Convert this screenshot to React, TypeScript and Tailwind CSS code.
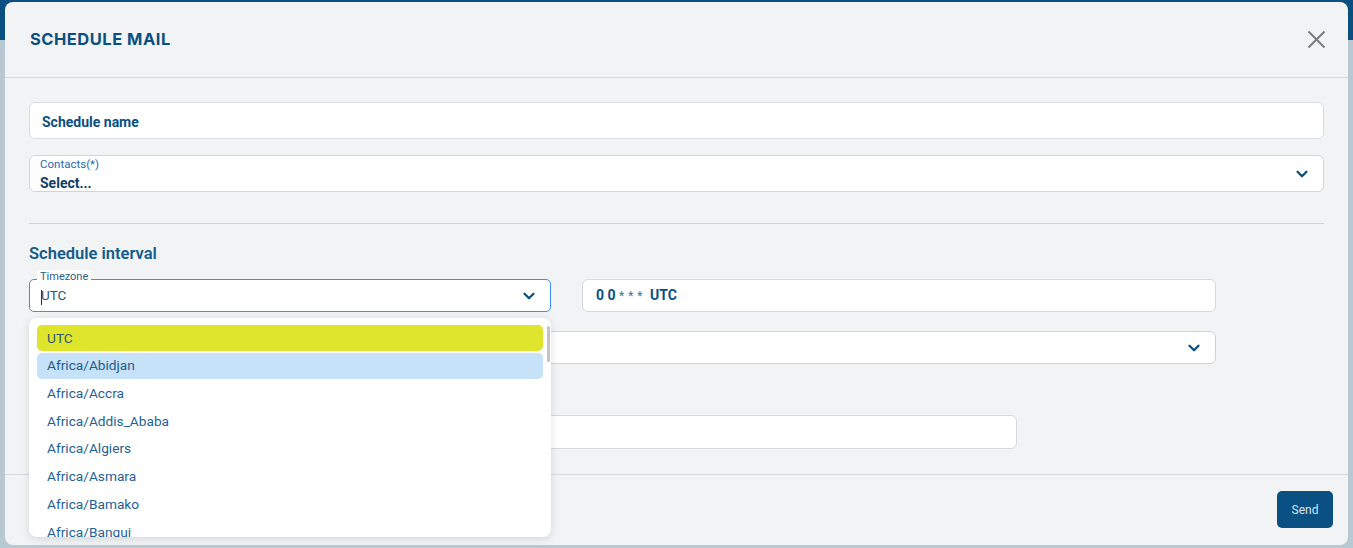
import React from 'react';
import { ChevronDown } from 'lucide-react';

const zones = [
  'UTC',
  'Africa/Abidjan',
  'Africa/Accra',
  'Africa/Addis_Ababa',
  'Africa/Algiers',
  'Africa/Asmara',
  'Africa/Bamako',
  'Africa/Bangui',
];

const Chevron: React.FC = () => (
  <ChevronDown className="text-[#0b4f82]" size={18} strokeWidth={3} />
);

const App: React.FC = () => {
  return (
    <div className="relative w-full h-[548px] overflow-hidden bg-[#b8c9d3] font-['Roboto',sans-serif]">
      {/* app behind the overlay */}
      <div className="absolute left-0 right-0 top-0 h-[40px] bg-[#0b4f80]" />

      <div className="relative h-full pt-[2px] pl-[5px] pr-[5px] pb-[3px]">
        <div className="h-full flex flex-col rounded-lg bg-[#f2f3f5]">
          {/* Header */}
          <div className="h-[76px] shrink-0 flex items-center justify-between pl-[25px] pr-[22px] border-b border-[#d6d9dc]">
            <h2 className="font-['Inter',sans-serif] font-bold text-[16.5px] tracking-[0.5px] text-[#0b4f82]">SCHEDULE MAIL</h2>
            <svg width="19" height="19" viewBox="0 0 19 19" className="text-[#7c7c7c]">
              <path d="M1.5 1.5 L17.5 17.5 M17.5 1.5 L1.5 17.5" stroke="currentColor" strokeWidth="2" fill="none" />
            </svg>
          </div>

          {/* Body */}
          <div className="flex-1 px-6 pt-6">
            <div className="h-[37px] flex items-center px-3 pt-[3px] bg-white border border-[#d9dcdf] rounded-md">
              <span className="text-[14px] font-bold text-[#0b4f82]">Schedule name</span>
            </div>

            <div className="mt-4 h-[37px] flex items-center justify-between pl-[10px] pr-[12px] bg-white border border-[#d2d5d8] rounded-md">
              <div className="flex flex-col leading-none pt-[2px]">
                <span className="text-[11.5px] text-[#1f6aab]">Contacts(*)</span>
                <span className="mt-[6px] text-[14px] font-bold text-[#123e63]">Select...</span>
              </div>
              <Chevron />
            </div>

            <div className="mt-[31px] border-t border-[#cfd2d6]" />

            <h3 className="mt-[20px] text-[16.5px] leading-5 font-semibold text-[#155a8a]">Schedule interval</h3>

            <div className="mt-[15px] flex gap-[31px] pr-[108px]">
              <div className="relative w-[522px] shrink-0">
                <div className="h-[33px] flex items-center justify-between pl-[11px] pr-[12px] bg-white border border-[#3b8ef0] rounded-[5px]">
                  <span className="flex items-center text-[13.5px] text-[#2a5577]">
                    <span className="w-px h-[15px] bg-[#1a3550] mr-[-1px] mt-[4px]" />
                    UTC
                  </span>
                  <Chevron />
                </div>
                <span className="absolute left-[8px] top-[-9px] px-[3px] bg-white rounded-t text-[11px] leading-[14px] text-[#2f5f85]">Timezone</span>

                {/* Dropdown */}
                <div className="absolute z-10 left-0 top-[39px] w-[522px] h-[219px] overflow-hidden bg-white rounded-lg shadow-[0_2px_8px_rgba(0,0,0,0.12)]">
                  <div className="flex flex-col gap-[1.7px] px-2 pt-[7px]">
                    {zones.map((z, i) => (
                      <div
                        key={z}
                        className={
                          'h-[26px] shrink-0 flex items-center px-[10px] rounded-[5px] text-[13.7px] ' +
                          (i === 0
                            ? 'bg-[#dfe52d] text-[#2c5a6e]'
                            : i === 1
                            ? 'bg-[#c6e2f9] text-[#1f5b8c]'
                            : 'text-[#1f5f96]')
                        }
                      >
                        {z}
                      </div>
                    ))}
                  </div>
                  <div className="absolute right-[1px] top-[8px] w-[3px] h-[36px] rounded bg-[#c4c4c4]" />
                </div>
              </div>

              <div className="flex-1 h-[33px] flex items-center px-[13px] bg-white border border-[#d6d9dc] rounded-md">
                <span className="text-[14px] font-bold text-[#0b4f82]">
                  0 0 <span className="font-normal text-[12px] tracking-[0.5px] text-[#3f73a0]">* * *</span>&nbsp; UTC
                </span>
              </div>
            </div>

            <div className="mt-[19px] mr-[108px] h-[33px] flex items-center justify-end pr-[12px] bg-white border border-[#d0d3d6] rounded-md">
              <Chevron />
            </div>

            <div className="mt-[51px] mr-[307px] h-[34px] bg-white border border-[#d6d9dc] rounded-md" />
          </div>

          {/* Footer */}
          <div className="h-[71px] shrink-0 border-t border-[#d6d9dc] flex justify-end pt-4 pr-[15px]">
            <button className="w-[56px] h-[37px] rounded-[5px] bg-[#0b5083] text-[12px] text-[#d8e6f1]">Send</button>
          </div>
        </div>
      </div>
    </div>
  );
};

export default App;
